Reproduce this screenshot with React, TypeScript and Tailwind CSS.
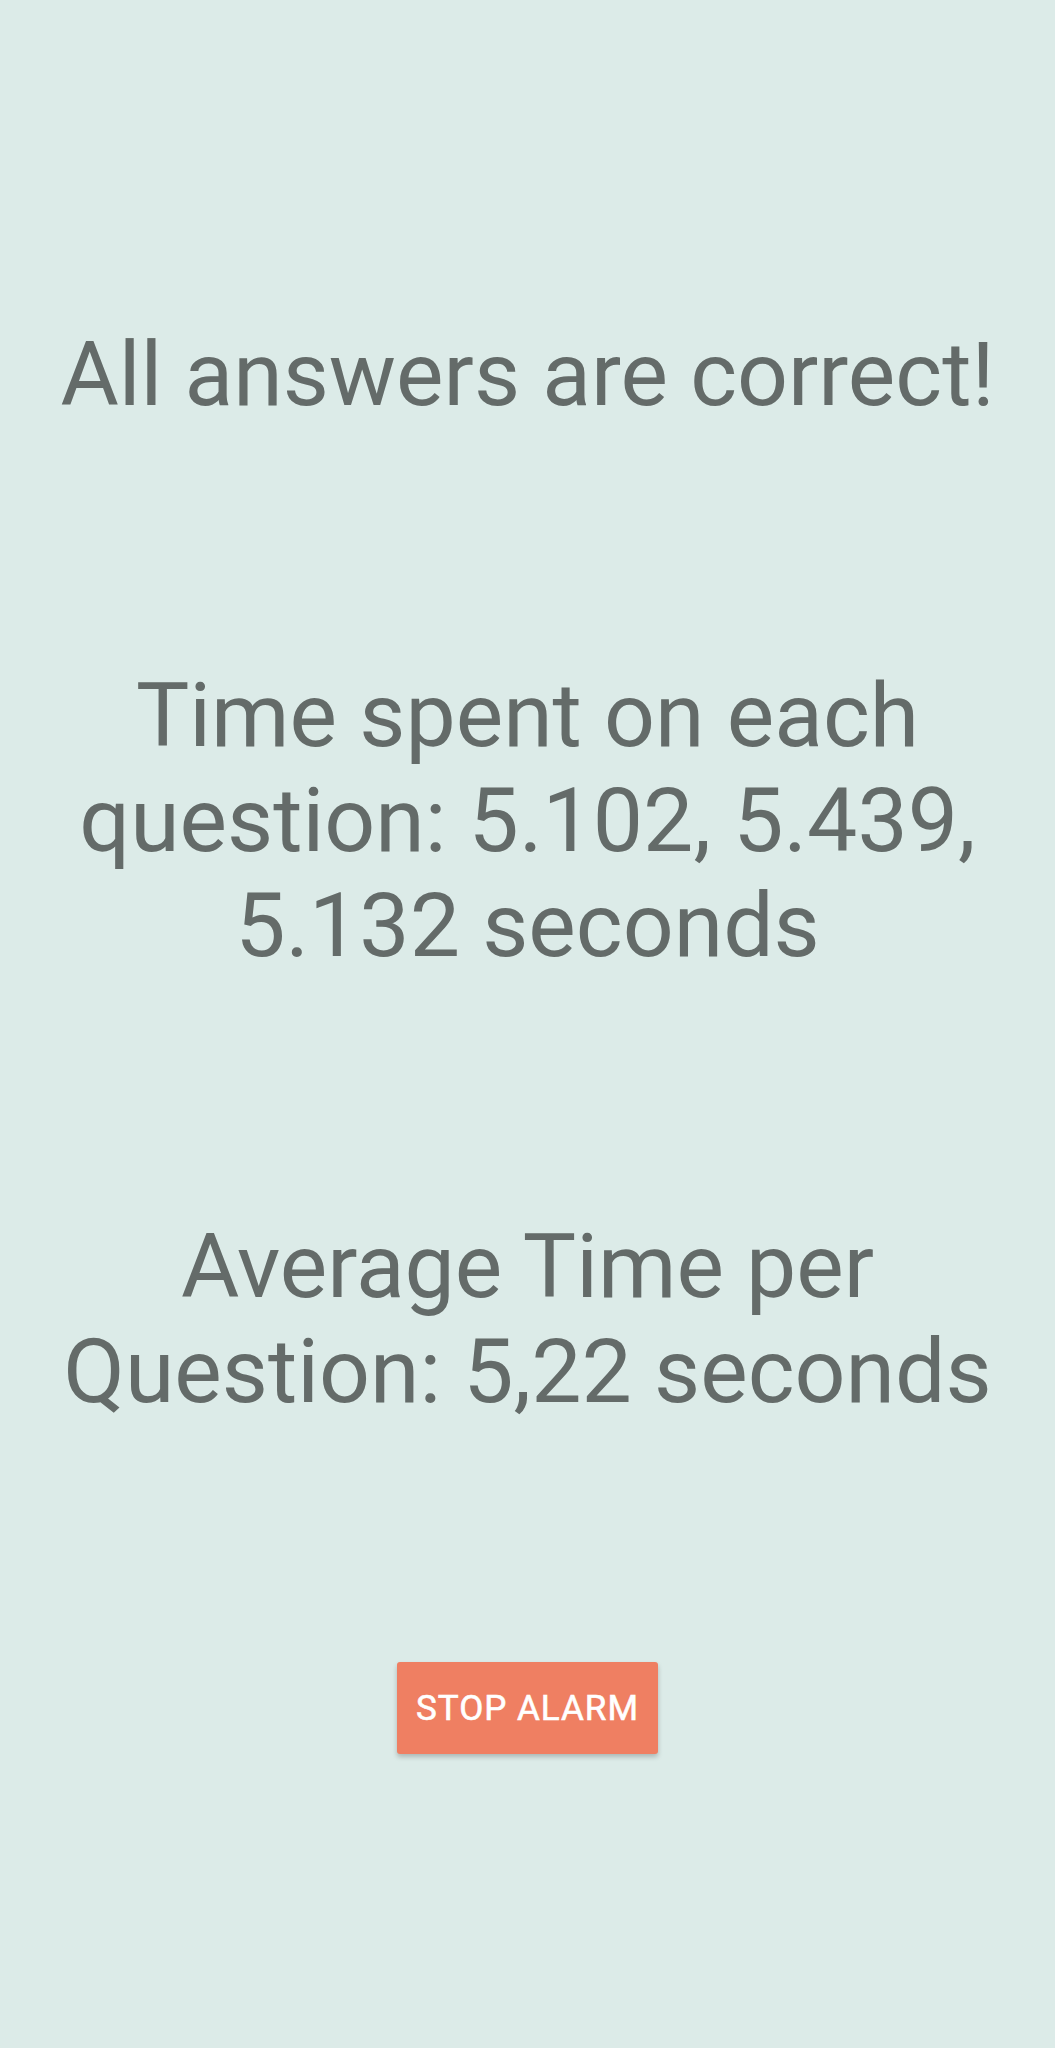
const ResultScreen: React.FC = () => {
    return (
        <div className="min-h-[2048px] w-full bg-[#dcebe8] flex flex-col items-center pt-[322px] gap-[236px] px-[50px] text-center text-[#646b69] text-[89.5px] leading-[105px]" style={{ fontFamily: 'Roboto, "Liberation Sans", sans-serif' }}>
            <p>All answers are correct!</p>
            <p>Time spent on each question: 5.102, 5.439, 5.132 seconds</p>
            <p>Average Time per Question: 5,22 seconds</p>
            {/* medium weight isn't installed, so thicken the regular face a bit */}
            <button className="mt-[2px] w-[261px] h-[92px] flex items-center justify-center rounded-[3px] bg-[#ef7f62] text-white text-[35px] leading-none font-normal tracking-[1px] [-webkit-text-stroke:0.6px_white] shadow-[0_3px_5px_rgba(0,0,0,0.22)]">
                STOP ALARM
            </button>
        </div>
    )
}

export default function App() {
    return <ResultScreen />
}
